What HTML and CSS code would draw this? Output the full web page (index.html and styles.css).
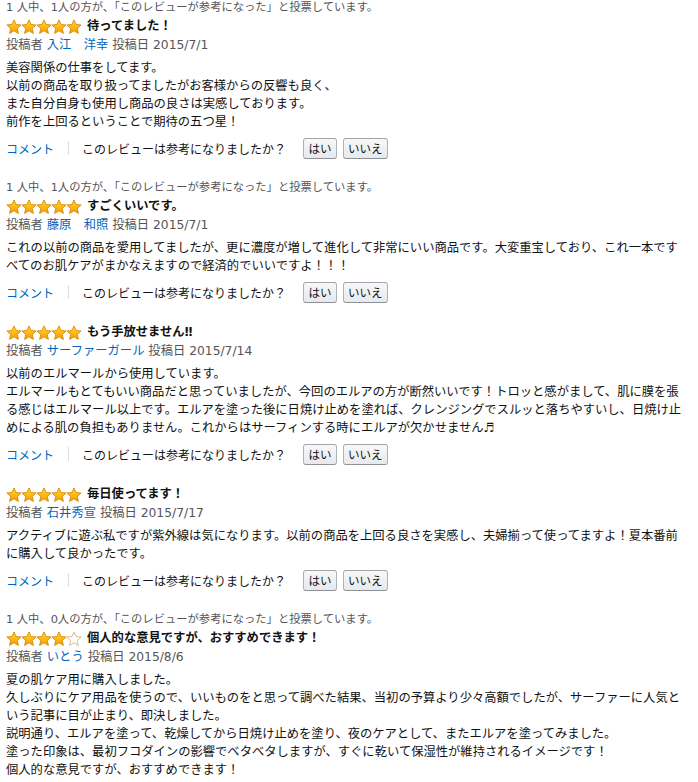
FILE: index.html
```html
<!DOCTYPE html>
<html lang="ja">
<head>
<meta charset="utf-8">
<link rel="stylesheet" href="styles.css">
</head>
<body>
<svg class="defs" width="0" height="0" aria-hidden="true">
  <defs>
    <linearGradient id="gold" x1="0" y1="0" x2="0" y2="1">
      <stop offset="0" stop-color="#ffd94a"/>
      <stop offset="0.55" stop-color="#fdb813"/>
      <stop offset="1" stop-color="#f29b00"/>
    </linearGradient>
    <symbol id="star" viewBox="0 0 16 16">
      <path d="M8 0.9 L10.1 5.5 L15.1 6 L11.3 9.4 L12.4 14.4 L8 11.8 L3.6 14.4 L4.7 9.4 L0.9 6 L5.9 5.5 Z" fill="url(#gold)" stroke="#d88a06" stroke-width="0.9" stroke-linejoin="round"/>
    </symbol>
    <symbol id="star-empty" viewBox="0 0 16 16">
      <path d="M8 0.9 L10.1 5.5 L15.1 6 L11.3 9.4 L12.4 14.4 L8 11.8 L3.6 14.4 L4.7 9.4 L0.9 6 L5.9 5.5 Z" fill="#fff" stroke="#d6b47c" stroke-width="0.9" stroke-linejoin="round"/>
    </symbol>
  </defs>
</svg>

<div class="reviews">

  <div class="review">
    <div class="helpful">1 人中、1人の方が、「このレビューが参考になった」と投票しています。</div>
    <div class="title-row">
      <span class="stars"><svg><use href="#star"/></svg><svg><use href="#star"/></svg><svg><use href="#star"/></svg><svg><use href="#star"/></svg><svg><use href="#star"/></svg></span>
      <span class="title">待ってました！</span>
    </div>
    <div class="byline">投稿者 <a class="author">入江　洋幸</a> 投稿日 2015/7/1</div>
    <div class="body">美容関係の仕事をしてます。<br>以前の商品を取り扱ってましたがお客様からの反響も良く、<br>また自分自身も使用し商品の良さは実感しております。<br>前作を上回るということで期待の五つ星！</div>
    <div class="actions">
      <a class="comment">コメント</a><span class="sep"></span><span class="ask">このレビューは参考になりましたか？</span>
      <span class="btn">はい</span><span class="btn">いいえ</span>
    </div>
  </div>

  <div class="review">
    <div class="helpful">1 人中、1人の方が、「このレビューが参考になった」と投票しています。</div>
    <div class="title-row">
      <span class="stars"><svg><use href="#star"/></svg><svg><use href="#star"/></svg><svg><use href="#star"/></svg><svg><use href="#star"/></svg><svg><use href="#star"/></svg></span>
      <span class="title">すごくいいです。</span>
    </div>
    <div class="byline">投稿者 <a class="author">藤原　和照</a> 投稿日 2015/7/1</div>
    <div class="body">これの以前の商品を愛用してましたが、更に濃度が増して進化して非常にいい商品です。大変重宝しており、これ一本ですべてのお肌ケアがまかなえますので経済的でいいですよ！！！</div>
    <div class="actions">
      <a class="comment">コメント</a><span class="sep"></span><span class="ask">このレビューは参考になりましたか？</span>
      <span class="btn">はい</span><span class="btn">いいえ</span>
    </div>
  </div>

  <div class="review">
    <div class="title-row">
      <span class="stars"><svg><use href="#star"/></svg><svg><use href="#star"/></svg><svg><use href="#star"/></svg><svg><use href="#star"/></svg><svg><use href="#star"/></svg></span>
      <span class="title">もう手放せません‼</span>
    </div>
    <div class="byline">投稿者 <a class="author">サーファーガール</a> 投稿日 2015/7/14</div>
    <div class="body">以前のエルマールから使用しています。<br>エルマールもとてもいい商品だと思っていましたが、今回のエルアの方が断然いいです！トロッと感がまして、肌に膜を張る感じはエルマール以上です。エルアを塗った後に日焼け止めを塗れば、クレンジングでスルッと落ちやすいし、日焼け止めによる肌の負担もありません。これからはサーフィンする時にエルアが欠かせません♬</div>
    <div class="actions">
      <a class="comment">コメント</a><span class="sep"></span><span class="ask">このレビューは参考になりましたか？</span>
      <span class="btn">はい</span><span class="btn">いいえ</span>
    </div>
  </div>

  <div class="review">
    <div class="title-row">
      <span class="stars"><svg><use href="#star"/></svg><svg><use href="#star"/></svg><svg><use href="#star"/></svg><svg><use href="#star"/></svg><svg><use href="#star"/></svg></span>
      <span class="title">毎日使ってます！</span>
    </div>
    <div class="byline">投稿者 <a class="author">石井秀宣</a> 投稿日 2015/7/17</div>
    <div class="body">アクティブに遊ぶ私ですが紫外線は気になります。以前の商品を上回る良さを実感し、夫婦揃って使ってますよ！夏本番前に購入して良かったです。</div>
    <div class="actions">
      <a class="comment">コメント</a><span class="sep"></span><span class="ask">このレビューは参考になりましたか？</span>
      <span class="btn">はい</span><span class="btn">いいえ</span>
    </div>
  </div>

  <div class="review">
    <div class="helpful">1 人中、0人の方が、「このレビューが参考になった」と投票しています。</div>
    <div class="title-row">
      <span class="stars"><svg><use href="#star"/></svg><svg><use href="#star"/></svg><svg><use href="#star"/></svg><svg><use href="#star"/></svg><svg><use href="#star-empty"/></svg></span>
      <span class="title">個人的な意見ですが、おすすめできます！</span>
    </div>
    <div class="byline">投稿者 <a class="author">いとう</a> 投稿日 2015/8/6</div>
    <div class="body">夏の肌ケア用に購入しました。<br>久しぶりにケア用品を使うので、いいものをと思って調べた結果、当初の予算より少々高額でしたが、サーファーに人気という記事に目が止まり、即決しました。<br>説明通り、エルアを塗って、乾燥してから日焼け止めを塗り、夜のケアとして、またエルアを塗ってみました。<br>塗った印象は、最初フコダインの影響でベタベタしますが、すぐに乾いて保湿性が維持されるイメージです！<br>個人的な意見ですが、おすすめできます！</div>
  </div>

</div>
</body>
</html>
```

FILE: styles.css
```css
html, body {
  margin: 0;
  padding: 0;
  background: #fff;
}

body {
  font-family: "DejaVu Sans", "Noto Sans CJK JP", sans-serif;
  color: #111;
}

.defs {
  position: absolute;
  width: 0;
  height: 0;
  overflow: hidden;
}

.reviews {
  width: 681px;
  padding: 0 0 0 6px;
  margin-top: -1px;
}

.review {
  margin-bottom: 20px;
}

.review:last-child {
  margin-bottom: 0;
}

.helpful {
  font-size: 11.3px;
  line-height: 18px;
  color: #555;
}

.title-row {
  display: flex;
  align-items: center;
  height: 19px;
}

.stars {
  display: flex;
  width: 81px;
  flex-shrink: 0;
}

.stars svg {
  width: 16px;
  height: 16px;
  margin-right: -1px;
  display: block;
}

.title {
  font-size: 12.3px;
  font-weight: bold;
  color: #111;
  line-height: 19px;
}

.byline {
  font-size: 12.3px;
  line-height: 19px;
  color: #555;
}

.author {
  color: #0066c0;
  text-decoration: none;
}

.body {
  margin-top: 4px;
  font-size: 12.3px;
  line-height: 18px;
  color: #111;
}

.actions {
  display: flex;
  align-items: center;
  height: 22px;
  margin-top: 6px;
  font-size: 12px;
}

.comment {
  color: #0066c0;
  text-decoration: none;
}

.sep {
  width: 1px;
  height: 14px;
  background: #ddd;
  margin: 0 13px 0 14px;
}

.ask {
  color: #111;
  margin-right: 17px;
}

.btn {
  display: inline-flex;
  align-items: center;
  justify-content: center;
  box-sizing: border-box;
  min-width: 34px;
  height: 21px;
  padding: 0 4px;
  margin-right: 6px;
  border: 1px solid #adb1b8;
  border-top-color: #a2a6ac;
  border-bottom-color: #8d9096;
  border-radius: 3px;
  background: linear-gradient(#f7f8fa, #e7e9ec);
  font-size: 11.5px;
  color: #111;
}
```
